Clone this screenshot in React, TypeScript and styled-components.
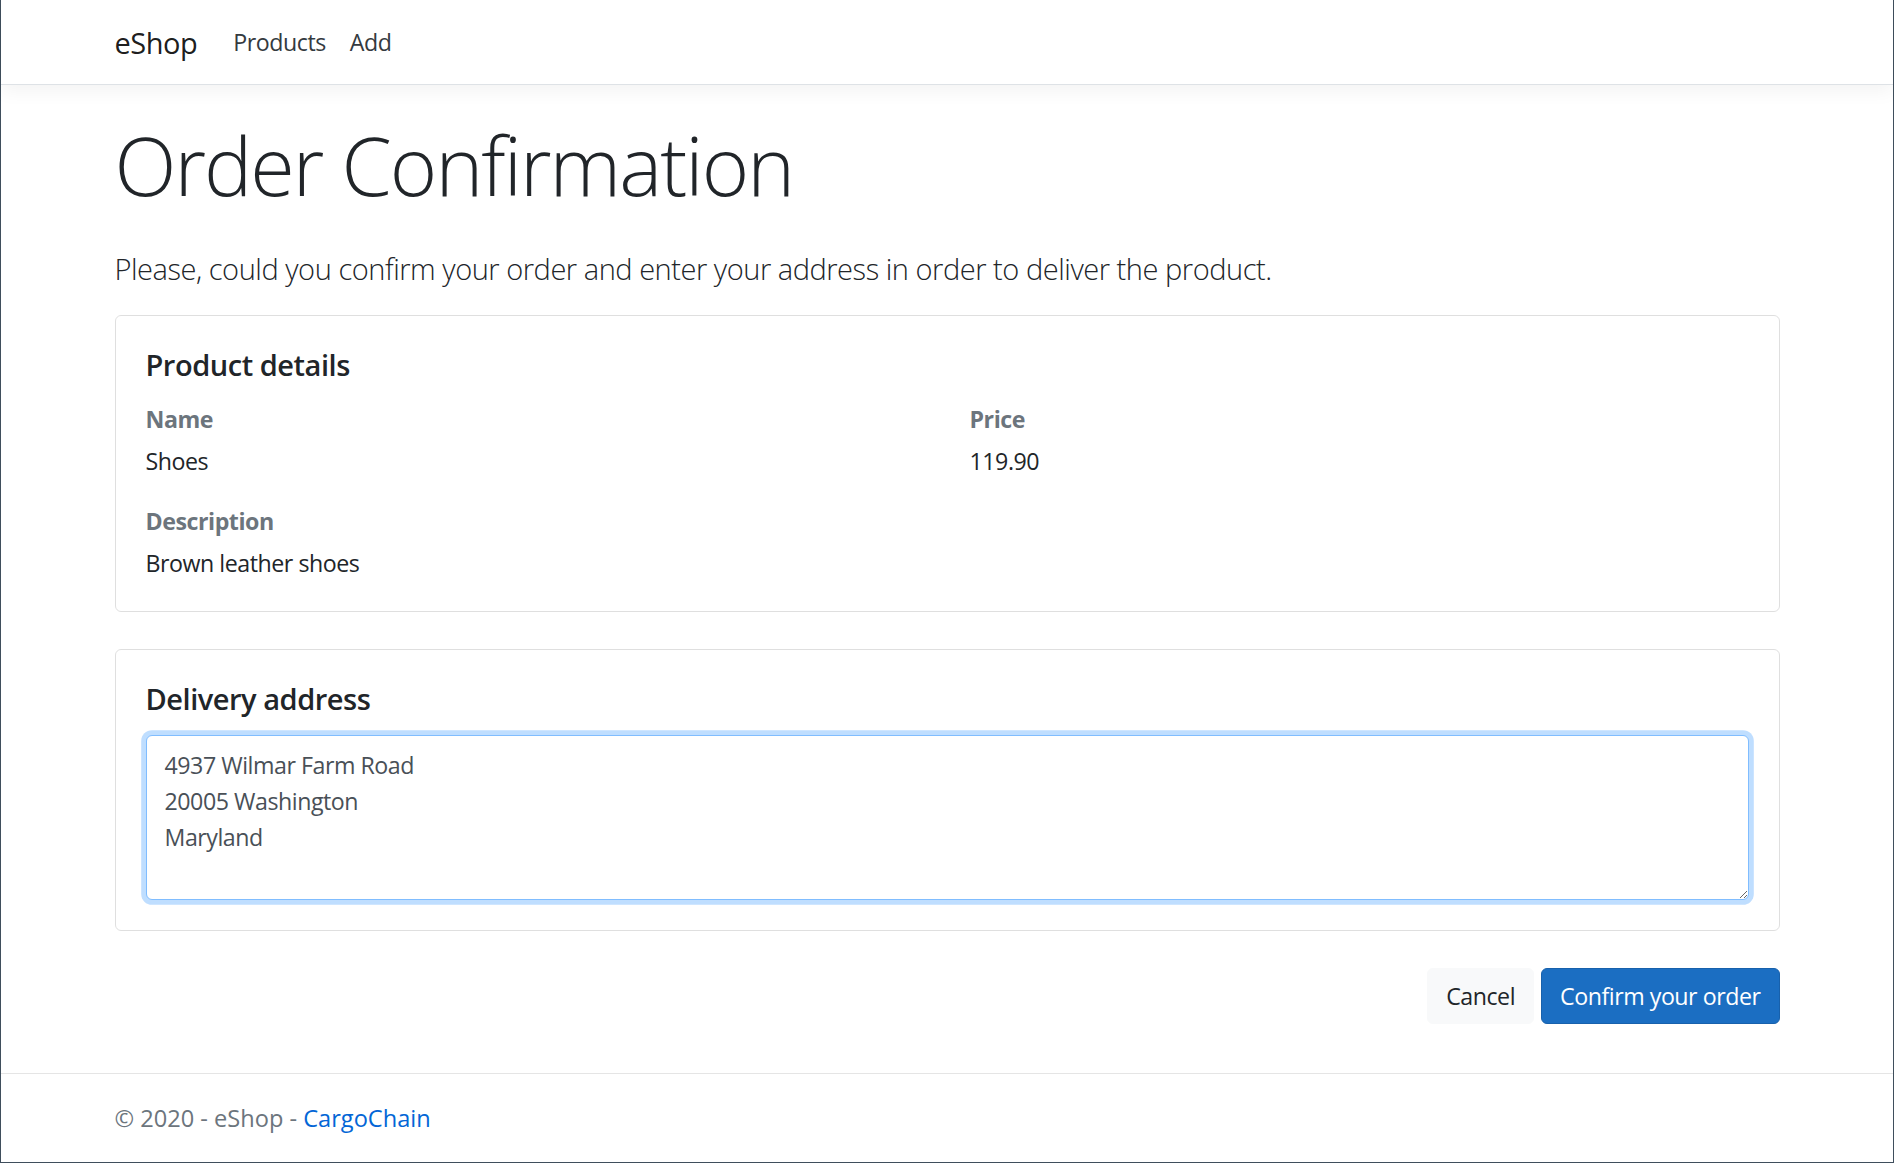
import React from "react";
import styled, { createGlobalStyle } from "styled-components";

const GlobalStyle = createGlobalStyle`
  *, *::before, *::after { box-sizing: border-box; }
  html, body { margin: 0; padding: 0; }
  body {
    font-family: "Open Sans", "Noto Sans", sans-serif;
    font-size: 23.2px;
    line-height: 36px;
    letter-spacing: -0.02em;
    color: #212529;
    background: #fff;
  }
`;

const Page = styled.div`
  min-height: 100vh;
  display: flex;
  flex-direction: column;
  border-left: 1px solid #3f4e5c;
  border-right: 1px solid #3f4e5c;
  border-bottom: 1px solid #3f4e5c;
`;

const NavBar = styled.nav`
  background: #fff;
  border-bottom: 1.5px solid #dee2e6;
  box-shadow: 0 6px 18px rgba(0, 0, 0, 0.05);
  padding: 12px 24px;
  margin-bottom: 24px;
`;

const Container = styled.div`
  width: 100%;
  max-width: 1710px;
  margin: 0 auto;
  padding: 0 22.5px;
`;

const NavInner = styled(Container)`
  display: flex;
  align-items: center;
`;

const Brand = styled.a`
  font-size: 29px;
  line-height: 45px;
  padding: 4.7px 0;
  margin-right: 24px;
  color: rgba(0, 0, 0, 0.9);
  text-decoration: none;
`;

const NavLink = styled.a`
  display: block;
  padding: 12px;
  line-height: 36px;
  color: #343a40;
  text-decoration: none;
`;

const Main = styled(Container)`
  padding-bottom: 24px;
`;

const Heading = styled.h1`
  font-size: 81px;
  font-weight: 300;
  line-height: 100.8px;
  letter-spacing: -0.024em;
  margin: 6px 0 30px;
`;

const Lead = styled.p`
  font-size: 29px;
  font-weight: 300;
  line-height: 45px;
  margin: 0 0 24px;
`;

const Card = styled.section`
  border: 1.5px solid rgba(0, 0, 0, 0.125);
  border-radius: 6px;
  padding: 31px 30px 30px;
  margin-bottom: 37px;
`;

const CardTitle = styled.h5`
  font-size: 29px;
  font-weight: 600;
  line-height: 36px;
  margin: 0 0 18px;
`;

const DetailGrid = styled.div`
  display: grid;
  grid-template-columns: 1fr 1fr;
  column-gap: 45px;
`;

const Column = styled.div`
  display: flex;
  flex-direction: column;
  gap: 24px;
`;

const Field = styled.div`
  display: flex;
  flex-direction: column;
  gap: 6px;
`;

const Label = styled.div`
  font-weight: 700;
  color: #6c757d;
`;

const Value = styled.div`
  color: #212529;
`;

const AddressInput = styled.textarea`
  display: block;
  width: 100%;
  height: 165px;
  padding: 11px 18px 7px;
  font-family: inherit;
  font-size: 23.2px;
  letter-spacing: -0.02em;
  line-height: 36px;
  color: #495057;
  background: #fff;
  border: 1.5px solid #80bdff;
  border-radius: 6px;
  box-shadow: 0 0 0 4.8px rgba(0, 123, 255, 0.25);
  outline: none;
  resize: vertical;
`;

const Actions = styled.div`
  display: flex;
  justify-content: flex-end;
  gap: 7px;
`;

const Button = styled.button<{ $variant: "light" | "primary" }>`
  font-family: inherit;
  font-size: 23.2px;
  letter-spacing: -0.02em;
  line-height: 36px;
  padding: 9px 18px;
  border-radius: 6px;
  cursor: pointer;
  border: 1.5px solid ${(p) => (p.$variant === "primary" ? "#1861ac" : "#f8f9fa")};
  background: ${(p) => (p.$variant === "primary" ? "#1b6ec2" : "#f8f9fa")};
  color: ${(p) => (p.$variant === "primary" ? "#fff" : "#212529")};
`;

const Footer = styled.footer`
  margin-top: auto;
  border-top: 1px solid #e5e5e5;
  font-size: 23.6px;
  letter-spacing: 0;
  line-height: 88px;
  color: #6c757d;
  white-space: nowrap;
`;

const FooterLink = styled.a`
  color: #0366d6;
  text-decoration: none;
`;

const address = "4937 Wilmar Farm Road\n20005 Washington\nMaryland";

export default function App() {
  return (
    <>
      <GlobalStyle />
      <Page>
        <NavBar>
          <NavInner>
            <Brand href="#">eShop</Brand>
            <NavLink href="#">Products</NavLink>
            <NavLink href="#">Add</NavLink>
          </NavInner>
        </NavBar>
        <Main>
          <Heading>Order Confirmation</Heading>
          <Lead>
            Please, could you confirm your order and enter your address in order to deliver the
            product.
          </Lead>
          <Card>
            <CardTitle>Product details</CardTitle>
            <DetailGrid>
              <Column>
                <Field>
                  <Label>Name</Label>
                  <Value>Shoes</Value>
                </Field>
                <Field>
                  <Label>Description</Label>
                  <Value>Brown leather shoes</Value>
                </Field>
              </Column>
              <Column>
                <Field>
                  <Label>Price</Label>
                  <Value>119.90</Value>
                </Field>
              </Column>
            </DetailGrid>
          </Card>
          <Card>
            <CardTitle>Delivery address</CardTitle>
            <AddressInput defaultValue={address} rows={4} />
          </Card>
          <Actions>
            <Button $variant="light">Cancel</Button>
            <Button $variant="primary">Confirm your order</Button>
          </Actions>
        </Main>
        <Footer>
          <Container>
            © 2020 - eShop - <FooterLink href="#">CargoChain</FooterLink>
          </Container>
        </Footer>
      </Page>
    </>
  );
}
